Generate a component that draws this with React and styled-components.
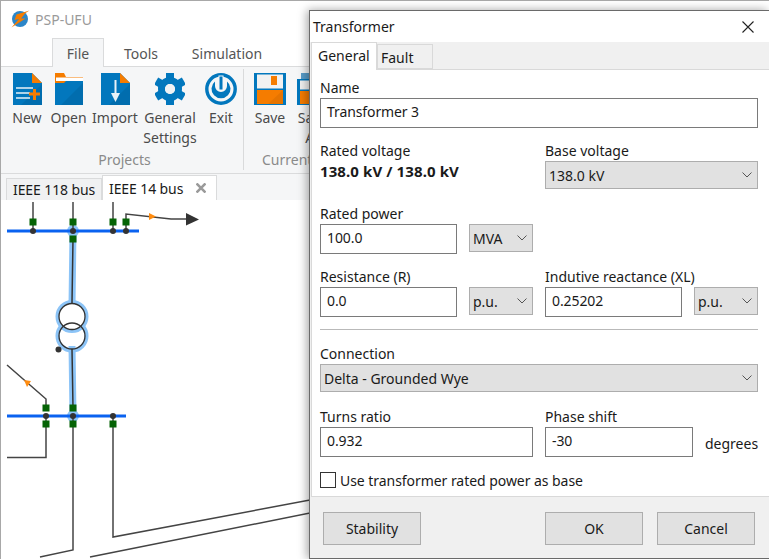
import React from "react";
import styled, { createGlobalStyle } from "styled-components";

const GlobalStyle = createGlobalStyle`
  html, body {
    margin: 0;
    padding: 0;
    width: 769px;
    height: 559px;
    overflow: hidden;
    background: #ffffff;
    font-family: "Noto Sans", "Open Sans", sans-serif;
  }
`;

const Desktop = styled.div`
  position: relative;
  width: 769px;
  height: 559px;
  overflow: hidden;
`;

const MainWindow = styled.div`
  box-sizing: border-box;
  width: 100%;
  height: 100%;
  border-left: 1px solid #a8a8a8;
  border-top: 1px solid #a8a8a8;
  display: flex;
  flex-direction: column;
`;

const TitleBar = styled.div`
  height: 37px;
  flex: none;
  display: flex;
  align-items: center;
  padding-left: 10px;
  gap: 5px;
  color: #9a9a9a;
  font-size: 14px;
`;

const MenuTabs = styled.div`
  height: 29px;
  flex: none;
  display: flex;
  padding-left: 51px;
  box-sizing: border-box;
  border-bottom: 1px solid #dadbdc;
`;

const MenuTab = styled.div`
  box-sizing: border-box;
  height: ${(p) => (p.$active ? "29px" : "28px")};
  width: ${(p) => p.$w}px;
  text-align: center;
  line-height: 29px;
  font-size: 14px;
  color: #555;
  background: ${(p) => (p.$active ? "#f5f6f7" : "transparent")};
  border: 1px solid ${(p) => (p.$active ? "#dadbdc" : "transparent")};
  border-bottom: none;
`;

const Ribbon = styled.div`
  height: 107px;
  flex: none;
  box-sizing: border-box;
  background: #f5f6f7;
  border-bottom: 1px solid #dadbdc;
  display: flex;
  padding-left: 8px;
`;

const RibbonGroup = styled.div`
  display: flex;
  flex-direction: column;
  width: ${(p) => p.$w}px;
  padding-right: 3px;
  border-right: ${(p) => (p.$sep ? "1px solid #d9dadb" : "none")};
  height: 101px;
  margin-top: 2px;
`;

const RibbonButtons = styled.div`
  display: flex;
  height: 80px;
`;

const RibbonButton = styled.div`
  width: ${(p) => p.$w}px;
  flex: none;
  display: flex;
  flex-direction: column;
  align-items: center;
  padding-top: 4px;
  font-size: 14px;
  line-height: 20px;
  color: #4a4a4a;
  text-align: center;
  white-space: nowrap;
  svg {
    display: block;
    margin-bottom: 3px;
  }
`;

const GroupCaption = styled.div`
  text-align: ${(p) => (p.$left ? "left" : "center")};
  padding-left: ${(p) => (p.$left ? "18px" : "0")};
  font-size: 14px;
  line-height: 20px;
  color: #8a8a8a;
  margin-top: 1px;
  white-space: nowrap;
`;

const DocTabs = styled.div`
  height: 26px;
  flex: none;
  background: #f5f6f7;
  display: flex;
  align-items: flex-end;
  padding-left: 5px;
  box-sizing: border-box;
`;

const DocTab = styled.div`
  box-sizing: border-box;
  width: ${(p) => p.$w}px;
  height: ${(p) => (p.$active ? "25px" : "22px")};
  display: flex;
  align-items: center;
  gap: 13px;
  padding-left: 6px;
  font-size: 14px;
  letter-spacing: -0.1px;
  color: #1a1a1a;
  background: ${(p) => (p.$active ? "#ffffff" : "#f0f1f2")};
  border: 1px solid #dadbdc;
  border-bottom: none;
`;

const Canvas = styled.div`
  flex: 1;
  background: #ffffff;
  svg {
    display: block;
    margin-left: -1px;
  }
`;

const Dialog = styled.div`
  position: absolute;
  left: 309px;
  top: 10px;
  width: 460px;
  height: 549px;
  box-sizing: border-box;
  border: 1px solid #6a6a6a;
  border-right: none;
  background: #f0f0f0;
  box-shadow: -2px 0 9px rgba(0, 0, 0, 0.35);
  display: flex;
  flex-direction: column;
  color: #1a1a1a;
  font-size: 14px;
`;

const DialogTitle = styled.div`
  height: 31px;
  flex: none;
  background: #ffffff;
  display: flex;
  align-items: center;
  justify-content: space-between;
  padding: 0 15px 0 3px;
`;

const TabStrip = styled.div`
  height: 27px;
  flex: none;
  display: flex;
  align-items: flex-end;
  padding-left: 1px;
  position: relative;
  z-index: 1;
`;

const DialogTab = styled.div`
  box-sizing: border-box;
  width: ${(p) => p.$w}px;
  height: ${(p) => (p.$active ? "28px" : "25px")};
  margin-bottom: ${(p) => (p.$active ? "-1px" : "0")};
  padding-left: ${(p) => (p.$active ? "6px" : "3px")};
  line-height: ${(p) => (p.$active ? "26px" : "25px")};
  background: ${(p) => (p.$active ? "#ffffff" : "#f0f0f0")};
  border: 1px solid #d9d9d9;
  border-bottom: ${(p) => (p.$active ? "none" : "1px solid #d9d9d9")};
`;

const Panel = styled.div`
  height: 428px;
  flex: none;
  box-sizing: border-box;
  background: #ffffff;
  border: 1px solid #d9d9d9;
  border-right: none;
  margin-left: 1px;
  padding: 8px 11px 0 8px;
`;

const Row = styled.div`
  display: grid;
  grid-template-columns: 213px 213px;
  column-gap: 12px;
  margin-top: ${(p) => p.$top || 0}px;
`;

const FullRow = styled.div`
  margin-top: ${(p) => p.$top || 0}px;
`;

const Pair = styled.div`
  display: grid;
  grid-template-columns: ${(p) => p.$cols};
  column-gap: 12px;
  align-items: start;
`;

const FieldLabel = styled.div`
  height: 20px;
  line-height: 19px;
  white-space: nowrap;
`;

const TextBox = styled.div`
  box-sizing: border-box;
  height: 30px;
  border: 1px solid #7a7a7a;
  padding-left: 6px;
  line-height: 26px;
  letter-spacing: -0.1px;
  background: #ffffff;
`;

const Select = styled.div`
  box-sizing: border-box;
  height: 28px;
  background: #e1e1e1;
  border: 1px solid #adadad;
  padding: 0 5px 0 3px;
  line-height: 27px;
  display: flex;
  justify-content: space-between;
  align-items: center;
`;

const BoldValue = styled.div`
  font-weight: 700;
  font-size: 15px;
  line-height: 21px;
  letter-spacing: 0.1px;
`;

const Separator = styled.div`
  height: 1px;
  background: #b9b9b9;
  margin-top: 12px;
`;

const Unit = styled.div`
  line-height: 20px;
  padding-top: 7px;
  white-space: nowrap;
  text-align: right;
`;

const CheckRow = styled.div`
  display: flex;
  align-items: center;
  gap: 4px;
  margin-top: 15px;
  height: 16px;
  line-height: 15px;
  letter-spacing: -0.05px;
`;

const CheckBox = styled.div`
  box-sizing: border-box;
  width: 16px;
  height: 16px;
  border: 1px solid #333;
  background: #fff;
`;

const Footer = styled.div`
  flex: 1;
  display: flex;
  padding: 15px 13px 0 13px;
  gap: 14px;
`;

const Button = styled.div`
  box-sizing: border-box;
  width: 98px;
  height: 33px;
  background: #e1e1e1;
  border: 1px solid #adadad;
  text-align: center;
  line-height: 31px;
  margin-right: ${(p) => p.$after || 0}px;
`;

const Chevron = () => (
  <svg width="10" height="6" viewBox="0 0 10 6" fill="none" stroke="#555" strokeWidth="1">
    <path d="M0.5 0.5 L5 5 L9.5 0.5" />
  </svg>
);

const BLUE = "#0277bd";
const ORANGE = "#f57c00";

const LogoIcon = () => (
  <svg width="19" height="19" viewBox="0 0 19 19">
    <circle cx="9" cy="9" r="8" fill="#2c86c8" />
    <path d="M18.5 0.5L5.5 4.5L3.5 10L8 9L0.5 17.5L14.5 8.5L10 8.5L14.5 3Z" fill="#f57c00" />
  </svg>
);

const NewIcon = () => (
  <svg width="29" height="32" viewBox="0 0 29 32">
    <path d="M0 0H19L29 10V32H0Z" fill={BLUE} />
    <path d="M8 32L29 11V32Z" fill="#000" opacity="0.08" />
    <path d="M19 0L29 10H19Z" fill={ORANGE} />
    <path d="M3 15H20M3 20H17M3 25H17" stroke="#e8f2f8" strokeWidth="1.6" />
    <path d="M16 21H27M21.5 16V27" stroke={ORANGE} strokeWidth="3" />
  </svg>
);

const OpenIcon = () => (
  <svg width="28" height="32" viewBox="0 0 28 32">
    <path d="M0 0H9L11 4H28V32H0Z" fill={ORANGE} />
    <path d="M1 4.5H28V8H1Z" fill="#fff" />
    <path d="M0 10H9L11 8H28V32H0Z" fill={BLUE} />
    <path d="M6 32L28 10V32Z" fill="#000" opacity="0.08" />
  </svg>
);

const ImportIcon = () => (
  <svg width="29" height="32" viewBox="0 0 29 32">
    <path d="M0 0H19L29 10V32H0Z" fill={BLUE} />
    <path d="M8 32L29 11V32Z" fill="#000" opacity="0.08" />
    <path d="M19 0L29 10H19Z" fill={ORANGE} />
    <path d="M14.5 7V24" stroke="#e8f2f8" strokeWidth="2" />
    <path d="M10 20H19L14.5 29Z" fill="#e8f2f8" />
  </svg>
);

const GearIcon = () => (
  <svg width="30" height="32" viewBox="0 0 30 32">
    <g transform="translate(15 16)">
      {[0, 60, 120, 180, 240, 300].map((a) => (
        <rect key={a} x="-4" y="-16" width="8" height="8" fill={BLUE} transform={`rotate(${a})`} />
      ))}
      <circle r="8.5" fill="none" stroke={BLUE} strokeWidth="7" />
      <circle r="5" fill="#f0f2f4" />
    </g>
  </svg>
);

const ExitIcon = () => (
  <svg width="32" height="32" viewBox="0 0 32 32">
    <circle cx="16" cy="16" r="14.2" fill="none" stroke={BLUE} strokeWidth="3.4" />
    <path d="M10 8.5A9.5 9.5 0 1 0 22 8.5L22 13A6 6 0 1 1 10 13Z" fill={BLUE} />
    <rect x="14" y="3" width="4" height="14" fill={BLUE} stroke="#f5f6f7" strokeWidth="1" />
  </svg>
);

const SaveIcon = () => (
  <svg width="32" height="32" viewBox="0 0 32 32">
    <path d="M0 0H32V32H0Z" fill={BLUE} />
    <rect x="3" y="1.5" width="26" height="14" fill="#f1f1f1" />
    <rect x="17" y="3" width="6" height="9" fill={ORANGE} />
    <rect x="3" y="17" width="26" height="14" fill={ORANGE} />
    <path d="M14 31L29 17V31Z" fill="#000" opacity="0.06" />
  </svg>
);

const SaveAsIcon = () => (
  <svg width="32" height="32" viewBox="0 0 32 32">
    <path d="M4 0H26V8H4Z" fill="#5a9dc9" />
    <path d="M0 6H32V32H0Z" fill={BLUE} />
    <rect x="3" y="7.5" width="26" height="9" fill="#f1f1f1" />
    <rect x="3" y="18" width="26" height="13" fill={ORANGE} />
  </svg>
);

const CloseTabIcon = () => (
  <svg width="10" height="10" viewBox="0 0 10 10" stroke="#9a9a9a" strokeWidth="2.6">
    <path d="M0.5 0.5 L9.5 9.5 M9.5 0.5 L0.5 9.5" />
  </svg>
);

const CloseIcon = () => (
  <svg width="12" height="12" viewBox="0 0 12 12" stroke="#222" strokeWidth="1.1">
    <path d="M0.5 0.5 L11.5 11.5 M11.5 0.5 L0.5 11.5" />
  </svg>
);

const nodes = [
  [33, 222], [73, 222], [113, 222], [126, 222], [73, 239],
  [46, 408], [73, 408], [46, 424], [73, 424], [113, 424],
];
const dots = [
  [33, 231], [73, 231], [113, 231], [126, 231],
  [46, 416], [73, 416], [113, 416], [58.5, 349.5],
];
const wires = [
  "M33 202V231", "M73 202V231", "M113 202V231",
  "M126 231V214L171 219H186",
  "M7 365L46 399V408", "M46 416V457.5H7",
  "M73 416V550L40 557", "M113 416V537L310 500", "M90 557L310 513",
];

const Diagram = () => (
  <svg width="310" height="359" viewBox="0 200 310 359" fill="none">
    <path d="M73 231L72 306M72 346L73 416" stroke="#8cc4f7" strokeWidth="7" />
    <circle cx="72" cy="316.5" r="14.5" stroke="#8cc4f7" strokeWidth="4" />
    <circle cx="72" cy="336" r="14.5" stroke="#8cc4f7" strokeWidth="4" />
    <circle cx="73" cy="231" r="6" fill="#8cc4f7" />
    <circle cx="73" cy="416" r="6" fill="#8cc4f7" />
    <path d="M7 231H139M7 416H126" stroke="#0a62f0" strokeWidth="3" />
    {wires.map((d) => (
      <path key={d} d={d} stroke="#444" strokeWidth="1.5" />
    ))}
    <path d="M73 239L72 303M72 349L73 408" stroke="#333" strokeWidth="1.5" />
    <circle cx="72" cy="316.5" r="13" stroke="#333" strokeWidth="1.3" fill="#fff" />
    <circle cx="72" cy="336" r="13" stroke="#333" strokeWidth="1.3" />
    <path d="M186 213L199 219.5L186 225.5Z" fill="#333" />
    <path d="M149 213L156 216.5L149 220Z" fill="#ff8c10" />
    <path d="M24 380L31 381L27 387Z" fill="#ff8c10" />
    {nodes.map(([x, y]) => (
      <rect key={`${x}-${y}`} x={x - 3.5} y={y - 3.5} width="7" height="7" fill="#056305" />
    ))}
    {dots.map(([x, y]) => (
      <circle key={`${x}-${y}`} cx={x} cy={y} r="3" fill="#333" />
    ))}
  </svg>
);

const App = () => (
  <Desktop>
    <GlobalStyle />
    <MainWindow>
      <TitleBar>
        <LogoIcon />
        PSP-UFU
      </TitleBar>
      <MenuTabs>
        <MenuTab $active $w={52}>File</MenuTab>
        <MenuTab $w={74}>Tools</MenuTab>
        <MenuTab $w={98}>Simulation</MenuTab>
      </MenuTabs>
      <Ribbon>
        <RibbonGroup $w={231} $sep>
          <RibbonButtons>
            <RibbonButton $w={36}><NewIcon />New</RibbonButton>
            <RibbonButton $w={47}><OpenIcon />Open</RibbonButton>
            <RibbonButton $w={46}><ImportIcon />Import</RibbonButton>
            <RibbonButton $w={64}><GearIcon />General<br />Settings</RibbonButton>
            <RibbonButton $w={38}><ExitIcon />Exit</RibbonButton>
          </RibbonButtons>
          <GroupCaption>Projects</GroupCaption>
        </RibbonGroup>
        <RibbonGroup $w={120}>
          <RibbonButtons>
            <RibbonButton $w={52}><SaveIcon />Save</RibbonButton>
            <RibbonButton $w={34}><SaveAsIcon />Save<br />As</RibbonButton>
          </RibbonButtons>
          <GroupCaption $left>Current</GroupCaption>
        </RibbonGroup>
      </Ribbon>
      <DocTabs>
        <DocTab $w={96}>IEEE 118 bus</DocTab>
        <DocTab $active $w={115}>IEEE 14 bus <CloseTabIcon /></DocTab>
      </DocTabs>
      <Canvas>
        <Diagram />
      </Canvas>
    </MainWindow>

    <Dialog>
      <DialogTitle>
        Transformer
        <CloseIcon />
      </DialogTitle>
      <TabStrip>
        <DialogTab $active $w={66}>General</DialogTab>
        <DialogTab $w={56}>Fault</DialogTab>
      </TabStrip>
      <Panel>
        <FieldLabel>Name</FieldLabel>
        <TextBox>Transformer 3</TextBox>

        <Row $top={13}>
          <div>
            <FieldLabel>Rated voltage</FieldLabel>
            <BoldValue>138.0 kV / 138.0 kV</BoldValue>
          </div>
          <div>
            <FieldLabel>Base voltage</FieldLabel>
            <Select>138.0 kV <Chevron /></Select>
          </div>
        </Row>

        <Row $top={15}>
          <div>
            <FieldLabel>Rated power</FieldLabel>
            <Pair $cols="137px 64px">
              <TextBox>100.0</TextBox>
              <Select>MVA <Chevron /></Select>
            </Pair>
          </div>
        </Row>

        <Row $top={13}>
          <div>
            <FieldLabel>Resistance (R)</FieldLabel>
            <Pair $cols="137px 64px">
              <TextBox>0.0</TextBox>
              <Select>p.u. <Chevron /></Select>
            </Pair>
          </div>
          <div>
            <FieldLabel>Indutive reactance (XL)</FieldLabel>
            <Pair $cols="137px 64px">
              <TextBox>0.25202</TextBox>
              <Select>p.u. <Chevron /></Select>
            </Pair>
          </div>
        </Row>

        <Separator />

        <FullRow $top={14}>
          <FieldLabel>Connection</FieldLabel>
          <Select>Delta - Grounded Wye <Chevron /></Select>
        </FullRow>

        <Row $top={15}>
          <div>
            <FieldLabel>Turns ratio</FieldLabel>
            <TextBox>0.932</TextBox>
          </div>
          <div>
            <FieldLabel>Phase shift</FieldLabel>
            <Pair $cols="148px 53px">
              <TextBox>-30</TextBox>
              <Unit>degrees</Unit>
            </Pair>
          </div>
        </Row>

        <CheckRow>
          <CheckBox />
          Use transformer rated power as base
        </CheckRow>
      </Panel>
      <Footer>
        <Button $after={110}>Stability</Button>
        <Button>OK</Button>
        <Button>Cancel</Button>
      </Footer>
    </Dialog>
  </Desktop>
);

export default App;
